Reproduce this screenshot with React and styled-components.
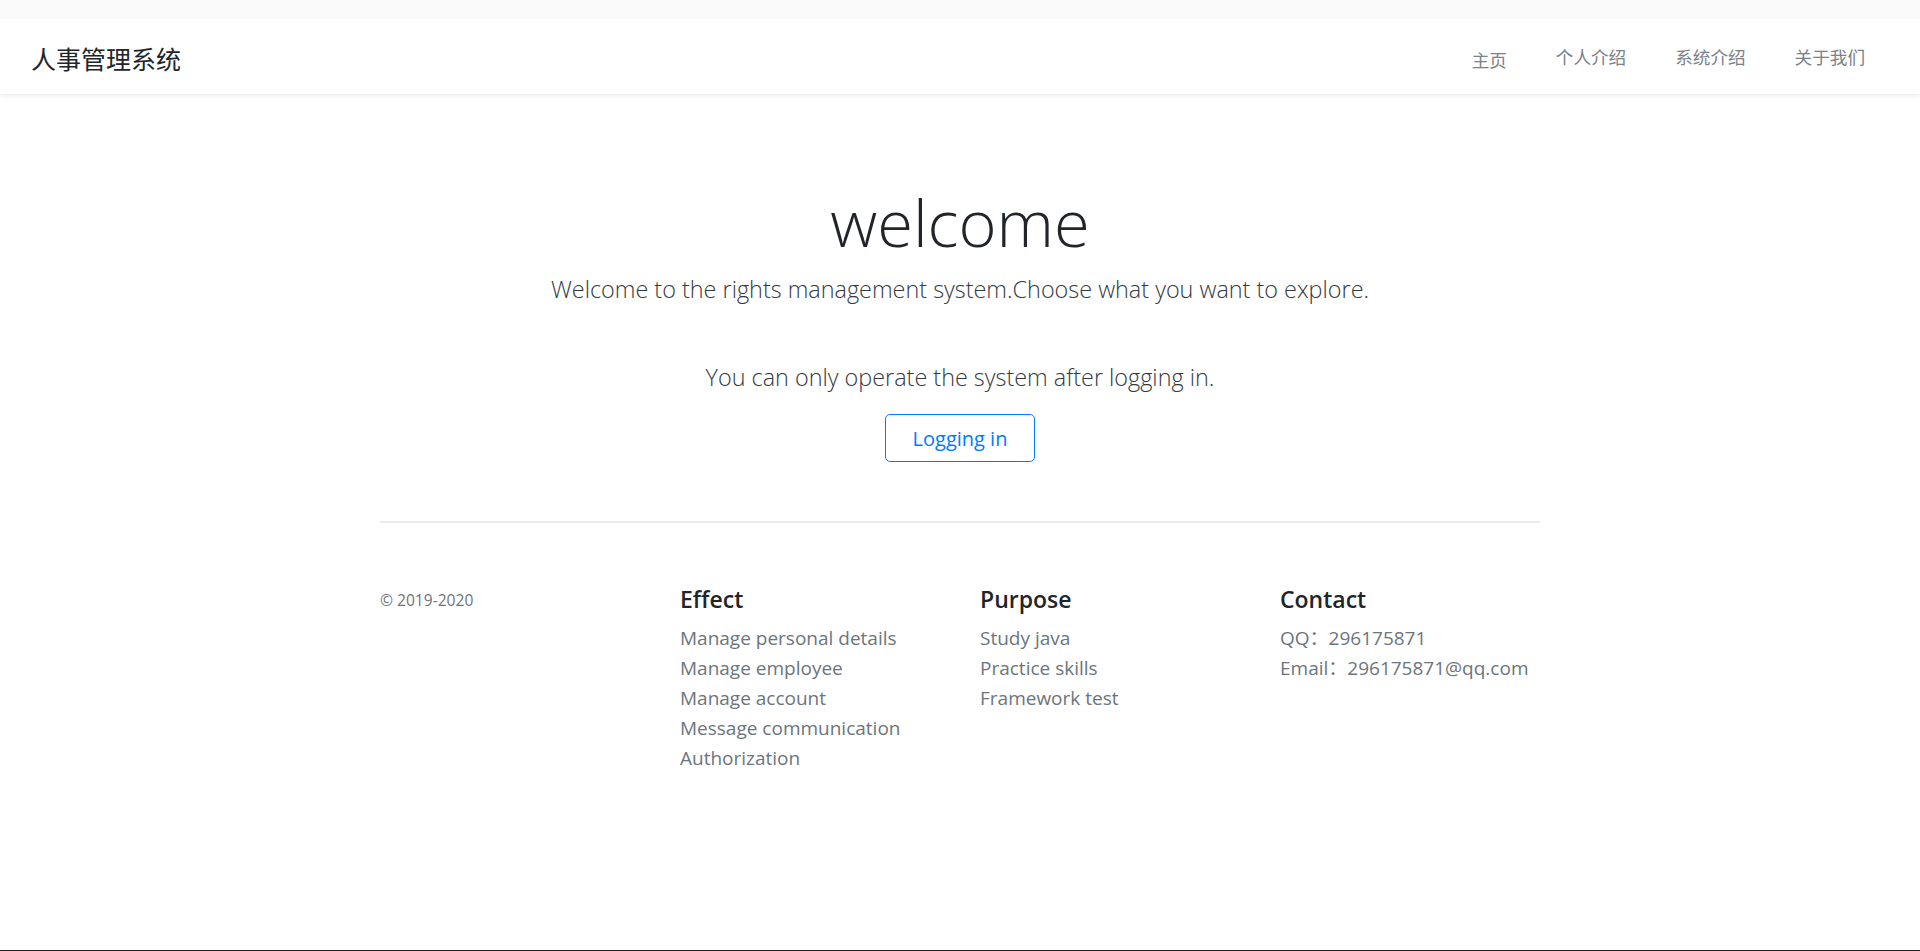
import React from "react";
import styled, { createGlobalStyle } from "styled-components";

const GlobalStyle = createGlobalStyle`
  html, body {
    margin: 0;
    padding: 0;
    background: #fff;
  }
  body {
    font-family: "Open Sans", "Noto Sans CJK SC", sans-serif;
    color: #212529;
  }
  * {
    box-sizing: border-box;
  }
`;

const Page = styled.div`
  min-height: 951px;
  display: flex;
  flex-direction: column;
  border-bottom: 1px solid #1e1e1e;
`;

const TopStrip = styled.div`
  height: 19px;
  background: #fafafa;
`;

const Navbar = styled.header`
  height: 75px;
  display: flex;
  align-items: center;
  justify-content: space-between;
  padding: 0 55px 0 31px;
  background: #fff;
  box-shadow: 0 2px 4px rgba(0, 0, 0, 0.08);
`;

const Brand = styled.div`
  font-family: "Noto Sans CJK SC", sans-serif;
  font-size: 25px;
  color: #212529;
  margin-top: 2px;
`;

const Nav = styled.nav`
  display: flex;
  gap: 49px;
  padding-top: 3px;
`;

const NavLink = styled.a`
  font-family: "Noto Sans CJK SC", sans-serif;
  font-size: 17.6px;
  color: #7b8189;
  text-decoration: none;
  padding-top: ${(p) => (p.$active ? "3px" : "0")};
`;

const Hero = styled.main`
  text-align: center;
  padding-top: 89px;
`;

const Title = styled.h1`
  font-size: 65px;
  font-weight: 300;
  line-height: 1.2;
  margin: 0;
  color: #212529;
`;

const Lead = styled.p`
  font-size: 23.4px;
  font-weight: 300;
  margin: 12px 0 0;
  color: #343a40;
`;

const Note = styled.p`
  font-size: 23.4px;
  font-weight: 300;
  margin: 56px 0 0;
  color: #343a40;
`;

const LoginButton = styled.button`
  margin-top: 21px;
  width: 150px;
  height: 48px;
  border: 1px solid #007bff;
  border-radius: 5px;
  background: #fff;
  color: #007bff;
  font-family: "Open Sans", sans-serif;
  font-size: 20px;
  cursor: pointer;
`;

const Container = styled.div`
  width: 1160px;
  margin: 0 auto;
`;

const Divider = styled.hr`
  margin: 59px 0 0;
  border: 0;
  border-top: 2px solid #e9ecef;
`;

const FooterGrid = styled.footer`
  display: grid;
  grid-template-columns: 300px 300px 300px 260px;
  padding-top: 60px;
`;

const Copyright = styled.small`
  display: block;
  font-size: 15.6px;
  color: #6c757d;
  padding-top: 6px;
`;

const Heading = styled.h5`
  font-size: 23px;
  font-weight: 600;
  margin: 0 0 8px;
  color: #212529;
`;

const List = styled.ul`
  list-style: none;
  margin: 0;
  padding: 0;
`;

const Item = styled.li`
  font-size: 19px;
  line-height: 30px;
  color: #6c757d;
`;

const columns = [
  {
    title: "Effect",
    items: [
      "Manage personal details",
      "Manage employee",
      "Manage account",
      "Message communication",
      "Authorization",
    ],
  },
  {
    title: "Purpose",
    items: ["Study java", "Practice skills", "Framework test"],
  },
  {
    title: "Contact",
    items: ["QQ：296175871", "Email：296175871@qq.com"],
  },
];

const App = () => {
  return (
    <>
      <GlobalStyle />
      <Page>
        <TopStrip />
        <Navbar>
          <Brand>人事管理系统</Brand>
          <Nav>
            <NavLink href="#" $active>
              主页
            </NavLink>
            <NavLink href="#">个人介绍</NavLink>
            <NavLink href="#">系统介绍</NavLink>
            <NavLink href="#">关于我们</NavLink>
          </Nav>
        </Navbar>

        <Hero>
          <Title>welcome</Title>
          <Lead>
            Welcome to the rights management system.Choose what you want to
            explore.
          </Lead>
          <Note>You can only operate the system after logging in.</Note>
          <LoginButton>Logging in</LoginButton>
        </Hero>

        <Container>
          <Divider />
          <FooterGrid>
            <div>
              <Copyright>© 2019-2020</Copyright>
            </div>
            {columns.map((col) => (
              <div key={col.title}>
                <Heading>{col.title}</Heading>
                <List>
                  {col.items.map((item) => (
                    <Item key={item}>{item}</Item>
                  ))}
                </List>
              </div>
            ))}
          </FooterGrid>
        </Container>
      </Page>
    </>
  );
};

export default App;
